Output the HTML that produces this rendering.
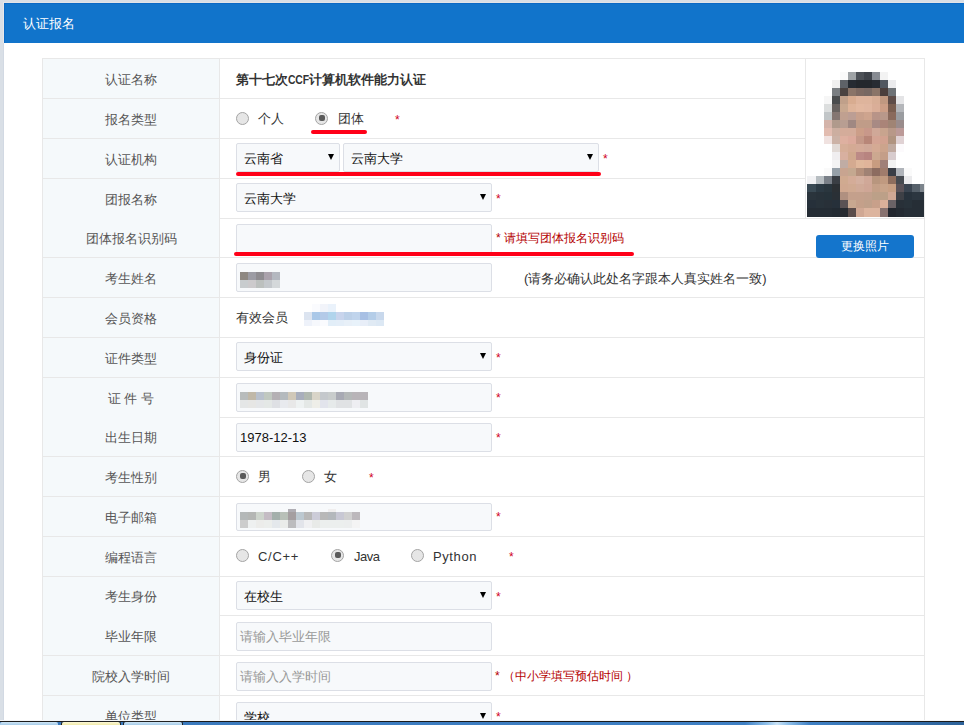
<!DOCTYPE html>
<html><head><meta charset="utf-8"><title>认证报名</title>
<style>
html,body{margin:0;padding:0;width:964px;height:725px;overflow:hidden;background:#d9dfe6;}
body{position:relative;font-family:"Liberation Sans",sans-serif;}
body div, body span.t, body span.arr, body svg{position:absolute;}
.t{white-space:nowrap;}
.lab{left:43px;width:176px;text-align:center;font-size:13px;color:#555;white-space:nowrap;}
.inp{box-sizing:border-box;background:#f7f9fb;border:1px solid #dcdfe6;border-radius:2px;}
.arr{width:0;height:0;border-left:3px solid transparent;border-right:3px solid transparent;border-top:6px solid #000;}
.rad{box-sizing:border-box;width:13px;height:13px;border-radius:50%;border:1px solid #a4a4a4;background:#e6e6e6;}
.rad.on::after{content:"";position:absolute;left:2.5px;top:2px;width:6px;height:6px;border-radius:2px;background:#5a5a5a;}
.rl{height:4px;border-radius:2px;background:#ff0018;}
.btn{box-sizing:border-box;background:#1475cc;border-radius:3px;color:#fff;font-size:13px;text-align:center;}
</style></head><body>
<div style="left:3px;top:2px;width:961px;height:1px;background:#e3e4e7;"></div>
<div style="left:3px;top:2px;width:1px;height:41px;background:#e6e8eb;"></div>
<div style="left:3px;top:43px;width:1px;height:678px;background:#d2d9e3;"></div>
<div style="left:4px;top:3px;width:960px;height:718px;background:#ffffff;"></div>
<div style="left:4px;top:3px;width:960px;height:40px;background:#1174cb;"></div>
<div style="left:4px;top:3px;width:960px;height:1px;background:#0b69c5;"></div>
<div style="left:4px;top:3px;width:1px;height:40px;background:#0b69c5;"></div>
<span class="t" style="left:23px;top:17px;font-size:13px;line-height:13px;color:#ffffff;">认证报名</span>
<div style="left:43px;top:59px;width:176px;height:662px;background:#f5f9fb;"></div>
<div style="left:42px;top:58px;width:1px;height:663px;background:#e8e8e8;"></div>
<div style="left:924px;top:58px;width:1px;height:663px;background:#e8e8e8;"></div>
<div style="left:219px;top:58px;width:1px;height:663px;background:#e8e8e8;"></div>
<div style="left:805px;top:58px;width:1px;height:160px;background:#e8e8e8;"></div>
<div style="left:42px;top:58px;width:883px;height:1px;background:#e8e8e8;"></div>
<div style="left:219px;top:98px;width:586px;height:1px;background:#e8e8e8;"></div>
<div style="left:42px;top:98px;width:177px;height:1px;background:#e8e8e8;"></div>
<div style="left:219px;top:138px;width:586px;height:1px;background:#e8e8e8;"></div>
<div style="left:42px;top:138px;width:177px;height:1px;background:#e8e8e8;"></div>
<div style="left:219px;top:178px;width:586px;height:1px;background:#e8e8e8;"></div>
<div style="left:42px;top:178px;width:177px;height:1px;background:#e8e8e8;"></div>
<div style="left:219px;top:218px;width:705px;height:1px;background:#e8e8e8;"></div>
<div style="left:219px;top:257px;width:705px;height:1px;background:#e8e8e8;"></div>
<div style="left:42px;top:257px;width:177px;height:1px;background:#e8e8e8;"></div>
<div style="left:219px;top:297px;width:705px;height:1px;background:#e8e8e8;"></div>
<div style="left:42px;top:297px;width:177px;height:1px;background:#e8e8e8;"></div>
<div style="left:219px;top:337px;width:705px;height:1px;background:#e8e8e8;"></div>
<div style="left:42px;top:337px;width:177px;height:1px;background:#e8e8e8;"></div>
<div style="left:219px;top:377px;width:705px;height:1px;background:#e8e8e8;"></div>
<div style="left:42px;top:377px;width:177px;height:1px;background:#e8e8e8;"></div>
<div style="left:219px;top:417px;width:705px;height:1px;background:#e8e8e8;"></div>
<div style="left:219px;top:456px;width:705px;height:1px;background:#e8e8e8;"></div>
<div style="left:42px;top:456px;width:177px;height:1px;background:#e8e8e8;"></div>
<div style="left:219px;top:496px;width:705px;height:1px;background:#e8e8e8;"></div>
<div style="left:42px;top:496px;width:177px;height:1px;background:#e8e8e8;"></div>
<div style="left:219px;top:536px;width:705px;height:1px;background:#e8e8e8;"></div>
<div style="left:42px;top:536px;width:177px;height:1px;background:#e8e8e8;"></div>
<div style="left:219px;top:576px;width:705px;height:1px;background:#e8e8e8;"></div>
<div style="left:42px;top:576px;width:177px;height:1px;background:#e8e8e8;"></div>
<div style="left:219px;top:615px;width:705px;height:1px;background:#e8e8e8;"></div>
<div style="left:219px;top:655px;width:705px;height:1px;background:#e8e8e8;"></div>
<div style="left:42px;top:655px;width:177px;height:1px;background:#e8e8e8;"></div>
<div style="left:219px;top:695px;width:705px;height:1px;background:#e8e8e8;"></div>
<div style="left:42px;top:695px;width:177px;height:1px;background:#e8e8e8;"></div>
<div class="lab" style="top:60px;height:39px;line-height:39px">认证名称</div>
<div class="lab" style="top:100px;height:39px;line-height:39px">报名类型</div>
<div class="lab" style="top:140px;height:39px;line-height:39px">认证机构</div>
<div class="lab" style="top:180px;height:39px;line-height:39px">团报名称</div>
<div class="lab" style="top:220px;height:38px;line-height:38px">团体报名识别码</div>
<div class="lab" style="top:259px;height:39px;line-height:39px">考生姓名</div>
<div class="lab" style="top:299px;height:39px;line-height:39px">会员资格</div>
<div class="lab" style="top:339px;height:39px;line-height:39px">证件类型</div>
<div class="lab" style="top:379px;height:39px;line-height:39px">证&nbsp;件&nbsp;号</div>
<div class="lab" style="top:419px;height:38px;line-height:38px">出生日期</div>
<div class="lab" style="top:458px;height:39px;line-height:39px">考生性别</div>
<div class="lab" style="top:498px;height:39px;line-height:39px">电子邮箱</div>
<div class="lab" style="top:538px;height:39px;line-height:39px">编程语言</div>
<div class="lab" style="top:578px;height:38px;line-height:38px">考生身份</div>
<div class="lab" style="top:617px;height:39px;line-height:39px">毕业年限</div>
<div class="lab" style="top:657px;height:39px;line-height:39px">院校入学时间</div>
<div class="lab" style="top:697px;height:39px;line-height:39px">单位类型</div>
<span class="t" style="left:236px;top:73px;font-size:13px;line-height:13px;color:#333;font-weight:bold">第十七次<span style="display:inline-block;transform:scaleX(0.8);transform-origin:0 0;margin-right:-5.5px;letter-spacing:-0.2px">CCF</span>计算机软件能力认证</span>
<div class="rad" style="left:236px;top:112px"></div>
<span class="t" style="left:258px;top:112px;font-size:13px;line-height:13px;color:#333;">个人</span>
<div class="rad on" style="left:315px;top:112px"></div>
<span class="t" style="left:338px;top:112px;font-size:13px;line-height:13px;color:#333;">团体</span>
<span class="t" style="left:395px;top:114px;font-size:12px;line-height:12px;color:#d0021b;">*</span>
<div class="rl" style="left:311px;top:130px;width:56px"></div>
<div class="inp" style="left:236px;top:143px;width:104px;height:29px"></div>
<span class="t" style="left:244px;top:152px;font-size:13px;line-height:13px;color:#111;">云南省</span>
<span class="arr" style="left:328px;top:154px"></span>
<div class="inp" style="left:343px;top:143px;width:256px;height:29px"></div>
<span class="t" style="left:351px;top:152px;font-size:13px;line-height:13px;color:#111;">云南大学</span>
<span class="arr" style="left:587px;top:154px"></span>
<span class="t" style="left:603px;top:153px;font-size:12px;line-height:12px;color:#d0021b;">*</span>
<div class="rl" style="left:236px;top:172px;width:365px"></div>
<div class="inp" style="left:236px;top:183px;width:256px;height:29px"></div>
<span class="t" style="left:244px;top:192px;font-size:13px;line-height:13px;color:#111;">云南大学</span>
<span class="arr" style="left:480px;top:194px"></span>
<span class="t" style="left:496px;top:193px;font-size:12px;line-height:12px;color:#d0021b;">*</span>
<div class="inp" style="left:236px;top:224px;width:256px;height:29px"></div>
<span class="t" style="left:496px;top:232px;font-size:12px;line-height:12px;color:#b40000;">* 请填写团体报名识别码</span>
<div class="rl" style="left:234px;top:252px;width:400px"></div>
<div class="btn" style="left:816px;top:235px;width:98px;height:23px;line-height:23px;font-size:12px">更换照片</div>
<div class="inp" style="left:236px;top:263px;width:256px;height:29px"></div>
<span class="t" style="left:524px;top:272px;font-size:13px;line-height:13px;color:#333;">(请务必确认此处名字跟本人真实姓名一致)</span>
<span class="t" style="left:236px;top:311px;font-size:13px;line-height:13px;color:#333;">有效会员</span>
<div class="inp" style="left:236px;top:342px;width:256px;height:29px"></div>
<span class="t" style="left:244px;top:351px;font-size:13px;line-height:13px;color:#111;">身份证</span>
<span class="arr" style="left:480px;top:353px"></span>
<span class="t" style="left:496px;top:352px;font-size:12px;line-height:12px;color:#d0021b;">*</span>
<div class="inp" style="left:236px;top:383px;width:256px;height:29px"></div>
<span class="t" style="left:496px;top:392px;font-size:12px;line-height:12px;color:#d0021b;">*</span>
<div class="inp" style="left:236px;top:423px;width:256px;height:29px"></div>
<span class="t" style="left:240px;top:431px;font-size:13px;line-height:13px;color:#111;">1978-12-13</span>
<span class="t" style="left:496px;top:432px;font-size:12px;line-height:12px;color:#d0021b;">*</span>
<div class="rad on" style="left:236px;top:470px"></div>
<span class="t" style="left:258px;top:470px;font-size:13px;line-height:13px;color:#333;">男</span>
<div class="rad" style="left:302px;top:470px"></div>
<span class="t" style="left:324px;top:470px;font-size:13px;line-height:13px;color:#333;">女</span>
<span class="t" style="left:369px;top:472px;font-size:12px;line-height:12px;color:#d0021b;">*</span>
<div class="inp" style="left:236px;top:503px;width:256px;height:28px"></div>
<span class="t" style="left:496px;top:511px;font-size:12px;line-height:12px;color:#d0021b;">*</span>
<div class="rad" style="left:236px;top:549px"></div>
<span class="t" style="left:258px;top:550px;font-size:13px;line-height:13px;color:#333;letter-spacing:0.7px">C/C++</span>
<div class="rad on" style="left:331px;top:549px"></div>
<span class="t" style="left:354px;top:550px;font-size:13px;line-height:13px;color:#333;letter-spacing:-0.5px">Java</span>
<div class="rad" style="left:411px;top:549px"></div>
<span class="t" style="left:433px;top:550px;font-size:13px;line-height:13px;color:#333;letter-spacing:0.6px">Python</span>
<span class="t" style="left:509px;top:551px;font-size:12px;line-height:12px;color:#d0021b;">*</span>
<div class="inp" style="left:236px;top:581px;width:256px;height:29px"></div>
<span class="t" style="left:244px;top:590px;font-size:13px;line-height:13px;color:#111;">在校生</span>
<span class="arr" style="left:480px;top:592px"></span>
<span class="t" style="left:496px;top:591px;font-size:12px;line-height:12px;color:#d0021b;">*</span>
<div class="inp" style="left:236px;top:622px;width:256px;height:29px"></div>
<span class="t" style="left:240px;top:630px;font-size:13px;line-height:13px;color:#999;">请输入毕业年限</span>
<div class="inp" style="left:236px;top:662px;width:256px;height:29px"></div>
<span class="t" style="left:240px;top:670px;font-size:13px;line-height:13px;color:#999;">请输入入学时间</span>
<span class="t" style="left:495px;top:670px;font-size:12px;line-height:12px;color:#b40000;">* （中小学填写预估时间<span style="margin-left:3px">）</span></span>
<div class="inp" style="left:236px;top:702px;width:256px;height:29px"></div>
<span class="t" style="left:244px;top:711px;font-size:13px;line-height:13px;color:#111;">学校</span>
<span class="arr" style="left:480px;top:713px"></span>
<span class="t" style="left:496px;top:711px;font-size:12px;line-height:12px;color:#d0021b;">*</span>
<svg style="position:absolute;left:240px;top:272px" width="40" height="16" shape-rendering="crispEdges"><rect x="0" y="0" width="8" height="8" fill="#8e8882"/><rect x="8" y="0" width="8" height="8" fill="#9c9ca4"/><rect x="16" y="0" width="8" height="8" fill="#8e8c90"/><rect x="24" y="0" width="8" height="8" fill="#aaa2ac"/><rect x="32" y="0" width="8" height="8" fill="#b4b8c0"/><rect x="0" y="8" width="8" height="8" fill="#c8ccce"/><rect x="8" y="8" width="8" height="8" fill="#cccacc"/><rect x="16" y="8" width="8" height="8" fill="#bcc0be"/><rect x="24" y="8" width="8" height="8" fill="#c4c8cc"/><rect x="32" y="8" width="8" height="8" fill="#d4d8da"/></svg>
<svg style="position:absolute;left:304px;top:304px" width="80" height="22" shape-rendering="crispEdges"><rect x="8" y="0" width="8" height="8" fill="#fafbfe"/><rect x="16" y="0" width="8" height="8" fill="#f2f4fa"/><rect x="24" y="0" width="8" height="8" fill="#eaf2fb"/><rect x="0" y="8" width="8" height="8" fill="#dce4f0"/><rect x="8" y="8" width="8" height="8" fill="#aac8e8"/><rect x="16" y="8" width="8" height="8" fill="#b4cae8"/><rect x="24" y="8" width="8" height="8" fill="#b0d4ec"/><rect x="32" y="8" width="8" height="8" fill="#c8d4ec"/><rect x="40" y="8" width="8" height="8" fill="#bcd0e8"/><rect x="48" y="8" width="8" height="8" fill="#c0d4ec"/><rect x="56" y="8" width="8" height="8" fill="#a8c0e4"/><rect x="64" y="8" width="8" height="8" fill="#b4cde8"/><rect x="72" y="8" width="8" height="8" fill="#c8d8ec"/><rect x="0" y="16" width="8" height="6" fill="#eef2fa"/><rect x="8" y="16" width="8" height="6" fill="#f6f8fc"/><rect x="16" y="16" width="8" height="6" fill="#fafbfe"/><rect x="24" y="16" width="8" height="6" fill="#e2eef8"/><rect x="32" y="16" width="8" height="6" fill="#e4eef8"/><rect x="40" y="16" width="8" height="6" fill="#e8f0f8"/><rect x="48" y="16" width="8" height="6" fill="#e8f2fa"/><rect x="56" y="16" width="8" height="6" fill="#e8eef8"/><rect x="64" y="16" width="8" height="6" fill="#e0eaf4"/><rect x="72" y="16" width="8" height="6" fill="#dce8f4"/></svg>
<svg style="position:absolute;left:240px;top:392px" width="128" height="16" shape-rendering="crispEdges"><rect x="0" y="0" width="8" height="8" fill="#b8bcbc"/><rect x="8" y="0" width="8" height="8" fill="#c0b8a8"/><rect x="16" y="0" width="8" height="8" fill="#b8c0cc"/><rect x="24" y="0" width="8" height="8" fill="#c0c8c0"/><rect x="32" y="0" width="8" height="8" fill="#b4b0b4"/><rect x="40" y="0" width="8" height="8" fill="#b4babe"/><rect x="48" y="0" width="8" height="8" fill="#d0c8b8"/><rect x="56" y="0" width="8" height="8" fill="#a8aebc"/><rect x="64" y="0" width="8" height="8" fill="#b0b8b0"/><rect x="72" y="0" width="8" height="8" fill="#d8d4c8"/><rect x="80" y="0" width="8" height="8" fill="#c4c8cc"/><rect x="88" y="0" width="8" height="8" fill="#c8cccc"/><rect x="96" y="0" width="8" height="8" fill="#a8aab4"/><rect x="104" y="0" width="8" height="8" fill="#b4b8b8"/><rect x="112" y="0" width="8" height="8" fill="#b8b4b8"/><rect x="120" y="0" width="8" height="8" fill="#b8b4b8"/><rect x="0" y="8" width="8" height="8" fill="#e4e6e6"/><rect x="8" y="8" width="8" height="8" fill="#e6e6e4"/><rect x="16" y="8" width="8" height="8" fill="#e4e6e8"/><rect x="24" y="8" width="8" height="8" fill="#e4e8e6"/><rect x="32" y="8" width="8" height="8" fill="#dee0e4"/><rect x="40" y="8" width="8" height="8" fill="#e8eaee"/><rect x="48" y="8" width="8" height="8" fill="#e8e8e8"/><rect x="56" y="8" width="8" height="8" fill="#eef2f2"/><rect x="64" y="8" width="8" height="8" fill="#e4e8e6"/><rect x="72" y="8" width="8" height="8" fill="#eeeee8"/><rect x="80" y="8" width="8" height="8" fill="#e2e4ec"/><rect x="88" y="8" width="8" height="8" fill="#e6eaea"/><rect x="96" y="8" width="8" height="8" fill="#e0e2e4"/><rect x="104" y="8" width="8" height="8" fill="#e0e2e4"/><rect x="112" y="8" width="8" height="8" fill="#eeeef2"/><rect x="120" y="8" width="8" height="8" fill="#e0e4e4"/></svg>
<svg style="position:absolute;left:240px;top:509px" width="120" height="19" shape-rendering="crispEdges"><rect x="48" y="0" width="8" height="3" fill="#b0aeb4"/><rect x="88" y="0" width="8" height="3" fill="#f0eeee"/><rect x="0" y="3" width="8" height="8" fill="#b4b8b8"/><rect x="8" y="3" width="8" height="8" fill="#b4b6b4"/><rect x="16" y="3" width="8" height="8" fill="#cdd4cc"/><rect x="24" y="3" width="8" height="8" fill="#c4bcc4"/><rect x="32" y="3" width="8" height="8" fill="#a4b0ac"/><rect x="40" y="3" width="8" height="8" fill="#b8c0b8"/><rect x="48" y="3" width="8" height="8" fill="#a49ea0"/><rect x="56" y="3" width="8" height="8" fill="#bcc8d0"/><rect x="64" y="3" width="8" height="8" fill="#b8b8b8"/><rect x="72" y="3" width="8" height="8" fill="#ccccd8"/><rect x="80" y="3" width="8" height="8" fill="#b8b8b8"/><rect x="88" y="3" width="8" height="8" fill="#b4b8bc"/><rect x="96" y="3" width="8" height="8" fill="#c8c8d4"/><rect x="104" y="3" width="8" height="8" fill="#d0d0d0"/><rect x="112" y="3" width="8" height="8" fill="#bcb8bc"/><rect x="0" y="11" width="8" height="8" fill="#cccccc"/><rect x="8" y="11" width="8" height="8" fill="#eef0f0"/><rect x="16" y="11" width="8" height="8" fill="#ececea"/><rect x="24" y="11" width="8" height="8" fill="#eceeec"/><rect x="32" y="11" width="8" height="8" fill="#e4e8ec"/><rect x="40" y="11" width="8" height="8" fill="#eaecea"/><rect x="48" y="11" width="8" height="8" fill="#bcbcbe"/><rect x="56" y="11" width="8" height="8" fill="#e2e4ea"/><rect x="64" y="11" width="8" height="8" fill="#f0f0f2"/><rect x="72" y="11" width="8" height="8" fill="#e8eae8"/><rect x="80" y="11" width="8" height="8" fill="#ecefee"/><rect x="88" y="11" width="8" height="8" fill="#ecefee"/><rect x="96" y="11" width="8" height="8" fill="#ecefee"/><rect x="104" y="11" width="8" height="8" fill="#eceeee"/><rect x="112" y="11" width="8" height="8" fill="#f4f4f4"/></svg>
<div style="left:806px;top:72px;width:118px;height:145px;overflow:hidden">
<svg style="position:absolute;left:1px;top:0px" width="121" height="145" shape-rendering="crispEdges"><rect x="0" y="0" width="9" height="8" fill="#ffffff"/><rect x="9" y="0" width="8" height="8" fill="#ffffff"/><rect x="17" y="0" width="8" height="8" fill="#ffffff"/><rect x="25" y="0" width="8" height="8" fill="#ffffff"/><rect x="33" y="0" width="8" height="8" fill="#fafafa"/><rect x="41" y="0" width="8" height="8" fill="#9fa3a6"/><rect x="49" y="0" width="8" height="8" fill="#4d5157"/><rect x="57" y="0" width="8" height="8" fill="#3f434a"/><rect x="65" y="0" width="8" height="8" fill="#878b92"/><rect x="73" y="0" width="8" height="8" fill="#f3f3f3"/><rect x="81" y="0" width="8" height="8" fill="#ffffff"/><rect x="89" y="0" width="8" height="8" fill="#ffffff"/><rect x="97" y="0" width="8" height="8" fill="#ffffff"/><rect x="105" y="0" width="8" height="8" fill="#ffffff"/><rect x="113" y="0" width="8" height="8" fill="#ffffff"/><rect x="0" y="8" width="9" height="8" fill="#ffffff"/><rect x="9" y="8" width="8" height="8" fill="#ffffff"/><rect x="17" y="8" width="8" height="8" fill="#ffffff"/><rect x="25" y="8" width="8" height="8" fill="#f0f0f0"/><rect x="33" y="8" width="8" height="8" fill="#5e6268"/><rect x="41" y="8" width="8" height="8" fill="#262b32"/><rect x="49" y="8" width="8" height="8" fill="#23272c"/><rect x="57" y="8" width="8" height="8" fill="#23272c"/><rect x="65" y="8" width="8" height="8" fill="#272c33"/><rect x="73" y="8" width="8" height="8" fill="#515760"/><rect x="81" y="8" width="8" height="8" fill="#ebebed"/><rect x="89" y="8" width="8" height="8" fill="#ffffff"/><rect x="97" y="8" width="8" height="8" fill="#ffffff"/><rect x="105" y="8" width="8" height="8" fill="#ffffff"/><rect x="113" y="8" width="8" height="8" fill="#ffffff"/><rect x="0" y="16" width="9" height="8" fill="#ffffff"/><rect x="9" y="16" width="8" height="8" fill="#ffffff"/><rect x="17" y="16" width="8" height="8" fill="#ffffff"/><rect x="25" y="16" width="8" height="8" fill="#7a7e82"/><rect x="33" y="16" width="8" height="8" fill="#4a4240"/><rect x="41" y="16" width="8" height="8" fill="#8a7468"/><rect x="49" y="16" width="8" height="8" fill="#7e6a62"/><rect x="57" y="16" width="8" height="8" fill="#786862"/><rect x="65" y="16" width="8" height="8" fill="#8a7468"/><rect x="73" y="16" width="8" height="8" fill="#4a3e3c"/><rect x="81" y="16" width="8" height="8" fill="#6e7276"/><rect x="89" y="16" width="8" height="8" fill="#ffffff"/><rect x="97" y="16" width="8" height="8" fill="#ffffff"/><rect x="105" y="16" width="8" height="8" fill="#ffffff"/><rect x="113" y="16" width="8" height="8" fill="#ffffff"/><rect x="0" y="24" width="9" height="8" fill="#ffffff"/><rect x="9" y="24" width="8" height="8" fill="#ffffff"/><rect x="17" y="24" width="8" height="8" fill="#f6f6f6"/><rect x="25" y="24" width="8" height="8" fill="#4a4c4e"/><rect x="33" y="24" width="8" height="8" fill="#c0a08a"/><rect x="41" y="24" width="8" height="8" fill="#d8ac90"/><rect x="49" y="24" width="8" height="8" fill="#deb49c"/><rect x="57" y="24" width="8" height="8" fill="#deb49c"/><rect x="65" y="24" width="8" height="8" fill="#d8ae96"/><rect x="73" y="24" width="8" height="8" fill="#c09880"/><rect x="81" y="24" width="8" height="8" fill="#5e4c48"/><rect x="89" y="24" width="8" height="8" fill="#e4e4e6"/><rect x="97" y="24" width="8" height="8" fill="#ffffff"/><rect x="105" y="24" width="8" height="8" fill="#ffffff"/><rect x="113" y="24" width="8" height="8" fill="#ffffff"/><rect x="0" y="32" width="9" height="8" fill="#ffffff"/><rect x="9" y="32" width="8" height="8" fill="#ffffff"/><rect x="17" y="32" width="8" height="8" fill="#dcdede"/><rect x="25" y="32" width="8" height="8" fill="#686260"/><rect x="33" y="32" width="8" height="8" fill="#c8a890"/><rect x="41" y="32" width="8" height="8" fill="#deb49a"/><rect x="49" y="32" width="8" height="8" fill="#e2b8a0"/><rect x="57" y="32" width="8" height="8" fill="#e0b6a0"/><rect x="65" y="32" width="8" height="8" fill="#daae98"/><rect x="73" y="32" width="8" height="8" fill="#cc9e86"/><rect x="81" y="32" width="8" height="8" fill="#7a5e50"/><rect x="89" y="32" width="8" height="8" fill="#b4b6ba"/><rect x="97" y="32" width="8" height="8" fill="#ffffff"/><rect x="105" y="32" width="8" height="8" fill="#ffffff"/><rect x="113" y="32" width="8" height="8" fill="#ffffff"/><rect x="0" y="40" width="9" height="8" fill="#ffffff"/><rect x="9" y="40" width="8" height="8" fill="#ffffff"/><rect x="17" y="40" width="8" height="8" fill="#c2c6c8"/><rect x="25" y="40" width="8" height="8" fill="#847672"/><rect x="33" y="40" width="8" height="8" fill="#c0a090"/><rect x="41" y="40" width="8" height="8" fill="#bc9e94"/><rect x="49" y="40" width="8" height="8" fill="#c8a08c"/><rect x="57" y="40" width="8" height="8" fill="#cea48e"/><rect x="65" y="40" width="8" height="8" fill="#b89488"/><rect x="73" y="40" width="8" height="8" fill="#b8988a"/><rect x="81" y="40" width="8" height="8" fill="#8a6a5c"/><rect x="89" y="40" width="8" height="8" fill="#9a9ca0"/><rect x="97" y="40" width="8" height="8" fill="#ffffff"/><rect x="105" y="40" width="8" height="8" fill="#ffffff"/><rect x="113" y="40" width="8" height="8" fill="#ffffff"/><rect x="0" y="48" width="9" height="8" fill="#ffffff"/><rect x="9" y="48" width="8" height="8" fill="#ffffff"/><rect x="17" y="48" width="8" height="8" fill="#d4b4aa"/><rect x="25" y="48" width="8" height="8" fill="#b09a8c"/><rect x="33" y="48" width="8" height="8" fill="#b89e92"/><rect x="41" y="48" width="8" height="8" fill="#a08882"/><rect x="49" y="48" width="8" height="8" fill="#c09c88"/><rect x="57" y="48" width="8" height="8" fill="#c09c88"/><rect x="65" y="48" width="8" height="8" fill="#a88a84"/><rect x="73" y="48" width="8" height="8" fill="#aa8478"/><rect x="81" y="48" width="8" height="8" fill="#a08474"/><rect x="89" y="48" width="8" height="8" fill="#9a8c8c"/><rect x="97" y="48" width="8" height="8" fill="#ffffff"/><rect x="105" y="48" width="8" height="8" fill="#ffffff"/><rect x="113" y="48" width="8" height="8" fill="#ffffff"/><rect x="0" y="56" width="9" height="8" fill="#ffffff"/><rect x="9" y="56" width="8" height="8" fill="#ffffff"/><rect x="17" y="56" width="8" height="8" fill="#e2bcb0"/><rect x="25" y="56" width="8" height="8" fill="#ccaea0"/><rect x="33" y="56" width="8" height="8" fill="#d4ac9a"/><rect x="41" y="56" width="8" height="8" fill="#d4ac9a"/><rect x="49" y="56" width="8" height="8" fill="#cc9e88"/><rect x="57" y="56" width="8" height="8" fill="#c8988a"/><rect x="65" y="56" width="8" height="8" fill="#d0a898"/><rect x="73" y="56" width="8" height="8" fill="#c8a48e"/><rect x="81" y="56" width="8" height="8" fill="#b89888"/><rect x="89" y="56" width="8" height="8" fill="#bc9a98"/><rect x="97" y="56" width="8" height="8" fill="#ffffff"/><rect x="105" y="56" width="8" height="8" fill="#ffffff"/><rect x="113" y="56" width="8" height="8" fill="#ffffff"/><rect x="0" y="64" width="9" height="8" fill="#ffffff"/><rect x="9" y="64" width="8" height="8" fill="#ffffff"/><rect x="17" y="64" width="8" height="8" fill="#f0e2e0"/><rect x="25" y="64" width="8" height="8" fill="#ccb2a6"/><rect x="33" y="64" width="8" height="8" fill="#deb0a0"/><rect x="41" y="64" width="8" height="8" fill="#dcaa9c"/><rect x="49" y="64" width="8" height="8" fill="#c49888"/><rect x="57" y="64" width="8" height="8" fill="#b88678"/><rect x="65" y="64" width="8" height="8" fill="#d4a494"/><rect x="73" y="64" width="8" height="8" fill="#d2a290"/><rect x="81" y="64" width="8" height="8" fill="#b09480"/><rect x="89" y="64" width="8" height="8" fill="#e0d2d4"/><rect x="97" y="64" width="8" height="8" fill="#ffffff"/><rect x="105" y="64" width="8" height="8" fill="#ffffff"/><rect x="113" y="64" width="8" height="8" fill="#ffffff"/><rect x="0" y="72" width="9" height="8" fill="#ffffff"/><rect x="9" y="72" width="8" height="8" fill="#ffffff"/><rect x="17" y="72" width="8" height="8" fill="#ffffff"/><rect x="25" y="72" width="8" height="8" fill="#e2dad6"/><rect x="33" y="72" width="8" height="8" fill="#d6ae98"/><rect x="41" y="72" width="8" height="8" fill="#d4aa94"/><rect x="49" y="72" width="8" height="8" fill="#d4aa98"/><rect x="57" y="72" width="8" height="8" fill="#d0a898"/><rect x="65" y="72" width="8" height="8" fill="#d4aa94"/><rect x="73" y="72" width="8" height="8" fill="#cca48c"/><rect x="81" y="72" width="8" height="8" fill="#c0aaa0"/><rect x="89" y="72" width="8" height="8" fill="#fcfafc"/><rect x="97" y="72" width="8" height="8" fill="#ffffff"/><rect x="105" y="72" width="8" height="8" fill="#ffffff"/><rect x="113" y="72" width="8" height="8" fill="#ffffff"/><rect x="0" y="80" width="9" height="8" fill="#ffffff"/><rect x="9" y="80" width="8" height="8" fill="#ffffff"/><rect x="17" y="80" width="8" height="8" fill="#ffffff"/><rect x="25" y="80" width="8" height="8" fill="#f0eef0"/><rect x="33" y="80" width="8" height="8" fill="#d8b0a0"/><rect x="41" y="80" width="8" height="8" fill="#d0a88e"/><rect x="49" y="80" width="8" height="8" fill="#bc8a86"/><rect x="57" y="80" width="8" height="8" fill="#b88480"/><rect x="65" y="80" width="8" height="8" fill="#cca890"/><rect x="73" y="80" width="8" height="8" fill="#c49e88"/><rect x="81" y="80" width="8" height="8" fill="#d8ccce"/><rect x="89" y="80" width="8" height="8" fill="#ffffff"/><rect x="97" y="80" width="8" height="8" fill="#ffffff"/><rect x="105" y="80" width="8" height="8" fill="#ffffff"/><rect x="113" y="80" width="8" height="8" fill="#ffffff"/><rect x="0" y="88" width="9" height="8" fill="#ffffff"/><rect x="9" y="88" width="8" height="8" fill="#ffffff"/><rect x="17" y="88" width="8" height="8" fill="#ffffff"/><rect x="25" y="88" width="8" height="8" fill="#f4f4f4"/><rect x="33" y="88" width="8" height="8" fill="#c0aca4"/><rect x="41" y="88" width="8" height="8" fill="#d4aa90"/><rect x="49" y="88" width="8" height="8" fill="#e0b89c"/><rect x="57" y="88" width="8" height="8" fill="#e0b49a"/><rect x="65" y="88" width="8" height="8" fill="#c89c80"/><rect x="73" y="88" width="8" height="8" fill="#a08078"/><rect x="81" y="88" width="8" height="8" fill="#f2f2f2"/><rect x="89" y="88" width="8" height="8" fill="#ffffff"/><rect x="97" y="88" width="8" height="8" fill="#ffffff"/><rect x="105" y="88" width="8" height="8" fill="#ffffff"/><rect x="113" y="88" width="8" height="8" fill="#ffffff"/><rect x="0" y="96" width="9" height="8" fill="#ffffff"/><rect x="9" y="96" width="8" height="8" fill="#ffffff"/><rect x="17" y="96" width="8" height="8" fill="#fafafa"/><rect x="25" y="96" width="8" height="8" fill="#96a0a8"/><rect x="33" y="96" width="8" height="8" fill="#c8a490"/><rect x="41" y="96" width="8" height="8" fill="#c4a890"/><rect x="49" y="96" width="8" height="8" fill="#b4907c"/><rect x="57" y="96" width="8" height="8" fill="#a08274"/><rect x="65" y="96" width="8" height="8" fill="#8c6c60"/><rect x="73" y="96" width="8" height="8" fill="#a07c6c"/><rect x="81" y="96" width="8" height="8" fill="#3a3e46"/><rect x="89" y="96" width="8" height="8" fill="#b0b4ba"/><rect x="97" y="96" width="8" height="8" fill="#fafafa"/><rect x="105" y="96" width="8" height="8" fill="#ffffff"/><rect x="113" y="96" width="8" height="8" fill="#ffffff"/><rect x="0" y="104" width="9" height="8" fill="#f2f2f4"/><rect x="9" y="104" width="8" height="8" fill="#b8bec2"/><rect x="17" y="104" width="8" height="8" fill="#7a8088"/><rect x="25" y="104" width="8" height="8" fill="#3a3e44"/><rect x="33" y="104" width="8" height="8" fill="#d0aa90"/><rect x="41" y="104" width="8" height="8" fill="#d4ac98"/><rect x="49" y="104" width="8" height="8" fill="#d4b0a0"/><rect x="57" y="104" width="8" height="8" fill="#d0a898"/><rect x="65" y="104" width="8" height="8" fill="#b8967e"/><rect x="73" y="104" width="8" height="8" fill="#c09a80"/><rect x="81" y="104" width="8" height="8" fill="#8e6e5e"/><rect x="89" y="104" width="8" height="8" fill="#464a50"/><rect x="97" y="104" width="8" height="8" fill="#eaeaec"/><rect x="105" y="104" width="8" height="8" fill="#ffffff"/><rect x="113" y="104" width="8" height="8" fill="#ffffff"/><rect x="0" y="112" width="9" height="8" fill="#3a4a54"/><rect x="9" y="112" width="8" height="8" fill="#2c3a44"/><rect x="17" y="112" width="8" height="8" fill="#2a363e"/><rect x="25" y="112" width="8" height="8" fill="#2c3034"/><rect x="33" y="112" width="8" height="8" fill="#d0a890"/><rect x="41" y="112" width="8" height="8" fill="#d0aa92"/><rect x="49" y="112" width="8" height="8" fill="#d0aa98"/><rect x="57" y="112" width="8" height="8" fill="#cfa696"/><rect x="65" y="112" width="8" height="8" fill="#c4a088"/><rect x="73" y="112" width="8" height="8" fill="#c8a48a"/><rect x="81" y="112" width="8" height="8" fill="#c8a084"/><rect x="89" y="112" width="8" height="8" fill="#5a5258"/><rect x="97" y="112" width="8" height="8" fill="#3a4450"/><rect x="105" y="112" width="8" height="8" fill="#56606a"/><rect x="113" y="112" width="8" height="8" fill="#7c848c"/><rect x="0" y="120" width="9" height="8" fill="#2a343c"/><rect x="9" y="120" width="8" height="8" fill="#28323a"/><rect x="17" y="120" width="8" height="8" fill="#26323a"/><rect x="25" y="120" width="8" height="8" fill="#2a3036"/><rect x="33" y="120" width="8" height="8" fill="#b09080"/><rect x="41" y="120" width="8" height="8" fill="#c4a08c"/><rect x="49" y="120" width="8" height="8" fill="#c4a08c"/><rect x="57" y="120" width="8" height="8" fill="#c2a08c"/><rect x="65" y="120" width="8" height="8" fill="#bca088"/><rect x="73" y="120" width="8" height="8" fill="#bca088"/><rect x="81" y="120" width="8" height="8" fill="#d0a894"/><rect x="89" y="120" width="8" height="8" fill="#3e4046"/><rect x="97" y="120" width="8" height="8" fill="#28323c"/><rect x="105" y="120" width="8" height="8" fill="#2c3640"/><rect x="113" y="120" width="8" height="8" fill="#2a343e"/><rect x="0" y="128" width="9" height="8" fill="#26303a"/><rect x="9" y="128" width="8" height="8" fill="#28323a"/><rect x="17" y="128" width="8" height="8" fill="#283038"/><rect x="25" y="128" width="8" height="8" fill="#26303a"/><rect x="33" y="128" width="8" height="8" fill="#5a5254"/><rect x="41" y="128" width="8" height="8" fill="#c8a890"/><rect x="49" y="128" width="8" height="8" fill="#c4a08a"/><rect x="57" y="128" width="8" height="8" fill="#c0a08a"/><rect x="65" y="128" width="8" height="8" fill="#c8a08a"/><rect x="73" y="128" width="8" height="8" fill="#dcb09a"/><rect x="81" y="128" width="8" height="8" fill="#6a6266"/><rect x="89" y="128" width="8" height="8" fill="#283038"/><rect x="97" y="128" width="8" height="8" fill="#28323a"/><rect x="105" y="128" width="8" height="8" fill="#262e36"/><rect x="113" y="128" width="8" height="8" fill="#262e36"/><rect x="0" y="136" width="9" height="9" fill="#242c34"/><rect x="9" y="136" width="8" height="9" fill="#242c34"/><rect x="17" y="136" width="8" height="9" fill="#242c34"/><rect x="25" y="136" width="8" height="9" fill="#222a32"/><rect x="33" y="136" width="8" height="9" fill="#262a30"/><rect x="41" y="136" width="8" height="9" fill="#5a4c4a"/><rect x="49" y="136" width="8" height="9" fill="#d0a894"/><rect x="57" y="136" width="8" height="9" fill="#dcb49e"/><rect x="65" y="136" width="8" height="9" fill="#dcb49e"/><rect x="73" y="136" width="8" height="9" fill="#887270"/><rect x="81" y="136" width="8" height="9" fill="#22262e"/><rect x="89" y="136" width="8" height="9" fill="#242a32"/><rect x="97" y="136" width="8" height="9" fill="#262e36"/><rect x="105" y="136" width="8" height="9" fill="#262e36"/><rect x="113" y="136" width="8" height="9" fill="#262e36"/></svg>
</div>
<div style="left:0px;top:720px;width:964px;height:1px;background:#f4f6f8;"></div>
<div style="left:0;top:721px;width:964px;height:4px;background:linear-gradient(90deg,#3a78bb 0px,#3f80c4 745px,#8fc0ea 767px,#c8e2f6 777px,#8fc0ea 788px,#3f80c4 810px,#2d6299 964px);border-top:1px solid #1b1b1b;box-sizing:border-box"></div>
<div style="left:0px;top:722px;width:58px;height:3px;background:linear-gradient(#cfe6f6,#a5cbe8);border-radius:2px 2px 0 0"></div>
<div style="left:62px;top:722px;width:58px;height:3px;background:linear-gradient(#fbf8d8,#f0e9a8);border-radius:2px 2px 0 0;box-shadow:0 0 0 1px #222"></div>
<div style="left:124px;top:722px;width:58px;height:3px;background:linear-gradient(#cfe6f6,#a5cbe8);border-radius:2px 2px 0 0;box-shadow:0 0 0 1px #222"></div>
</body></html>
